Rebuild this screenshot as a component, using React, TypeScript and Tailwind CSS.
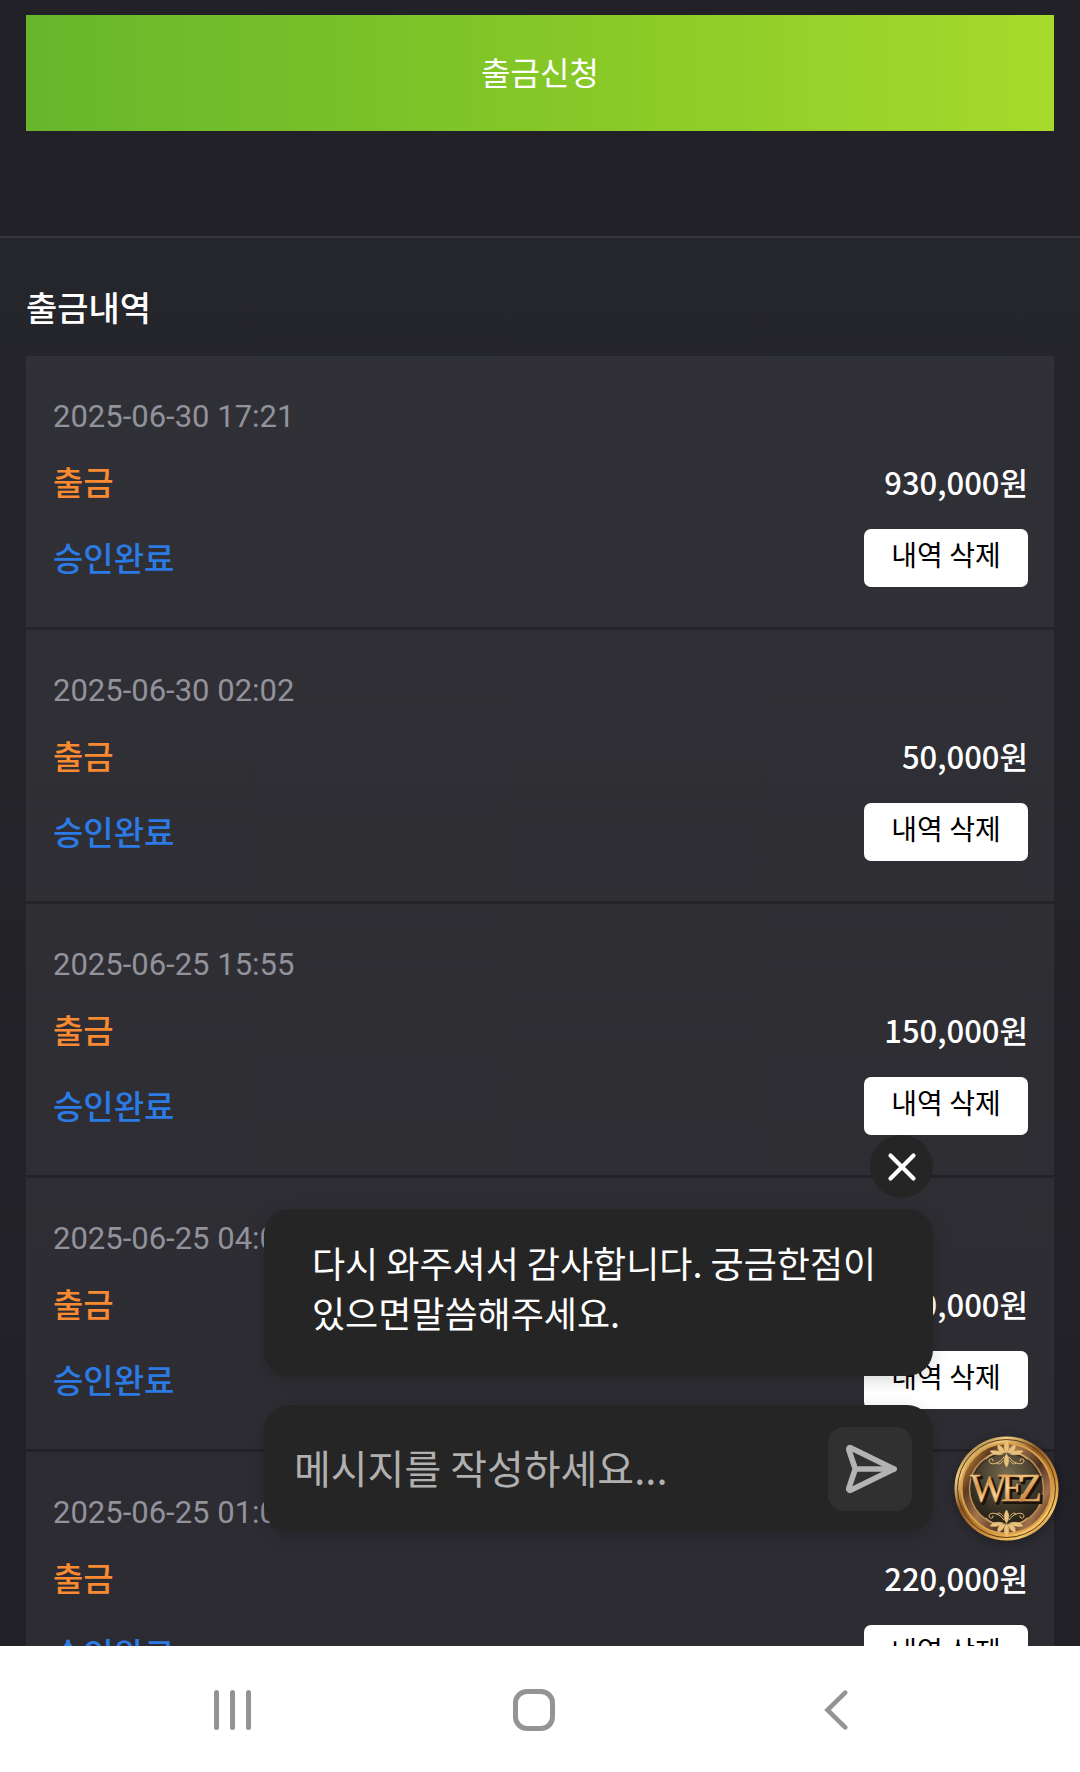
import { X } from "lucide-react";

const KR = "font-['Noto_Sans_CJK_KR',sans-serif]";

type Entry = { id: number; date: string; amount: string };

const entries: Entry[] = [
  { id: 1, date: "2025-06-30 17:21", amount: "930,000원" },
  { id: 2, date: "2025-06-30 02:02", amount: "50,000원" },
  { id: 3, date: "2025-06-25 15:55", amount: "150,000원" },
  { id: 4, date: "2025-06-25 04:02", amount: "100,000원" },
  { id: 5, date: "2025-06-25 01:03", amount: "220,000원" },
];

function HistoryRow({ entry }: { entry: Entry }) {
  return (
    <li className="mb-[3px] bg-white/5 pt-[35px] pr-[26px] pb-10 pl-[27px]">
      <time className="block font-[Roboto,sans-serif] text-[31px] leading-[52px] text-[#92929b]">
        {entry.date}
      </time>
      <div className="mt-[10px] flex h-[58px] items-center justify-between">
        <span className="text-[33px] font-medium text-[#f98a32]">출금</span>
        <span className="text-[31px] font-medium text-white">{entry.amount}</span>
      </div>
      <div className="mt-[18px] flex h-[58px] items-center justify-between">
        <span className="text-[33px] font-medium text-[#2c7be5]">승인완료</span>
        <button
          type="button"
          className="h-[58px] w-[164px] rounded-[7px] bg-white pb-2 text-[28px] leading-[50px] text-black"
        >
          내역 삭제
        </button>
      </div>
    </li>
  );
}

function Flourish() {
  return (
    <g fill="#e9c27d" stroke="#e9c27d" strokeWidth="0.600" strokeLinecap="round">
      <path d="M52.500 5c3 4 3 8 0 12c-3-4-3-8 0-12Z" />
      <path d="M51 17c-6 0-8-4-7-8c4 1 6 4 7 8ZM54 17c6 0 8-4 7-8c-4 1-6 4-7 8Z" />
      <path d="M49 18c-6 2-11 0-13-3c6-1 10 0 13 3ZM56 18c6 2 11 0 13-3c-6-1-10 0-13 3Z" />
      <path d="M52.500 18c3 4 3 9 0 13c-3-4-3-9 0-13Z" />
      <path
        d="M50 21c-4 7-14 9-15 4c0-3 5-3 4 0M55 21c4 7 14 9 15 4c0-3-5-3-4 0M46 18c-8-2-11 3-14 5M59 18c8-2 11 3 14 5M49 25c-2 3-5 4-6 2M56 25c2 3 5 4 6 2"
        fill="none"
        strokeWidth="1"
      />
    </g>
  );
}

function WezLogo() {
  return (
    <svg viewBox="0 0 105 105" className="size-full" aria-hidden="true">
      <defs>
        <linearGradient id="rim" x1="0.1" y1="0" x2="0.9" y2="1">
          <stop offset="0" stopColor="#7b4d18" />
          <stop offset="0.2" stopColor="#f0ce85" />
          <stop offset="0.4" stopColor="#8c5822" />
          <stop offset="0.65" stopColor="#c98a38" />
          <stop offset="0.85" stopColor="#f7c768" />
          <stop offset="1" stopColor="#7a4512" />
        </linearGradient>
        <linearGradient id="ring" x1="0" y1="0.2" x2="1" y2="0.8">
          <stop offset="0" stopColor="#c98b3c" />
          <stop offset="0.18" stopColor="#5c3a22" />
          <stop offset="0.4" stopColor="#a5764a" />
          <stop offset="0.65" stopColor="#4d2f22" />
          <stop offset="0.85" stopColor="#a1714c" />
          <stop offset="1" stopColor="#553216" />
        </linearGradient>
        <radialGradient id="disc" cx="0.5" cy="0.3" r="0.75">
          <stop offset="0" stopColor="#786b50" />
          <stop offset="0.5" stopColor="#463d2c" />
          <stop offset="1" stopColor="#1d1812" />
        </radialGradient>
        <linearGradient id="letters" x1="0" y1="0" x2="1" y2="1">
          <stop offset="0" stopColor="#fff0cd" />
          <stop offset="0.3" stopColor="#d99a50" />
          <stop offset="0.5" stopColor="#f6d497" />
          <stop offset="0.75" stopColor="#c98442" />
          <stop offset="1" stopColor="#fbe0ac" />
        </linearGradient>
      </defs>
      <circle cx="52.500" cy="52.500" r="52" fill="url(#rim)" />
      <circle cx="52.500" cy="52.500" r="49" fill="none" stroke="#5d3912" strokeWidth="1" />
      <circle cx="52.500" cy="52.500" r="45" fill="url(#ring)" stroke="#d9a04a" strokeWidth="2" />
      <circle cx="52.500" cy="52.500" r="37" fill="url(#disc)" stroke="#b88f58" strokeWidth="1.500" />
      <circle cx="52.500" cy="52.500" r="35" fill="none" stroke="#3b2918" strokeWidth="1" />
      <Flourish />
      <g transform="rotate(180 52.500 52.500)">
        <Flourish />
      </g>
      <g fontFamily="Liberation Serif, serif" fontSize="39">
        <text x="18 49 66" y="67" fill="#1b120a" stroke="#1b120a" strokeWidth="2">WEZ</text>
        <text x="16 47 64" y="65" fill="url(#letters)" stroke="#e0a65c" strokeWidth="0.500">WEZ</text>
      </g>
    </svg>
  );
}

function ChatWidget() {
  return (
    <>
      <section
        aria-label="채팅"
        className="absolute right-[147px] bottom-[114px] flex w-[669px] flex-col items-end"
      >
        <button
          type="button"
          aria-label="닫기"
          className="flex size-[63px] items-center justify-center rounded-full bg-[#252525] text-white"
        >
          <X className="size-[46px]" strokeWidth={2.2} />
        </button>
        <p className="mt-[11px] w-full rounded-[26px] bg-[#252525] px-12 pt-7 pb-[39px] text-[36px] leading-[50px] text-white shadow-[0_4px_16px_rgba(0,0,0,0.16)]">
          다시 와주셔서 감사합니다. 궁금한점이
          <br />
          있으면말씀해주세요.
        </p>
        <form
          onSubmit={(e) => e.preventDefault()}
          className="mt-[29px] flex h-[127px] w-full items-center rounded-[26px] bg-[#252525] pr-[21px] pl-[30px] shadow-[0_4px_16px_rgba(0,0,0,0.16)]"
        >
          <input
            type="text"
            aria-label="메시지"
            placeholder="메시지를 작성하세요..."
            className="min-w-0 flex-1 bg-transparent pb-1 text-[40px] text-white outline-none placeholder:text-[#b0b0b0]"
          />
          <button
            type="submit"
            aria-label="보내기"
            className="flex size-[84px] items-center justify-center rounded-[16px] bg-[#303030] text-[#b3b3b3]"
          >
            <svg
              viewBox="0 0 24 24"
              className="size-16"
              fill="none"
              stroke="currentColor"
              strokeWidth="2.1"
              strokeLinecap="round"
              strokeLinejoin="round"
              aria-hidden="true"
            >
              <path d="M4.700 4.030L21 12L4.700 19.970a.5.5 0 0 1-.55-.12a.56.56 0 0 1-.12-.57L6.500 12L4.030 4.730a.56.56 0 0 1 .12-.57a.5.5 0 0 1 .55-.13Z" />
              <path d="M6.500 12H21" />
            </svg>
          </button>
        </form>
      </section>
      <button
        type="button"
        aria-label="WEZ 채팅"
        className="absolute right-[21px] bottom-[105px] size-[105px] rounded-full shadow-[0_2px_12px_rgba(0,0,0,0.3)]"
      >
        <WezLogo />
      </button>
    </>
  );
}

function NavigationBar() {
  return (
    <nav
      aria-label="시스템"
      className="grid h-[126px] shrink-0 grid-cols-3 items-center justify-items-center bg-white pt-px pr-[93px] pl-[81px] text-[#949494]"
    >
      <button type="button" aria-label="최근 앱" className="flex h-10 gap-[11px]">
        <span className="w-[5px] rounded-full bg-current" />
        <span className="w-[5px] rounded-full bg-current" />
        <span className="w-[5px] rounded-full bg-current" />
      </button>
      <button
        type="button"
        aria-label="홈"
        className="size-[42px] rounded-[14px] border-5 border-current"
      />
      <button type="button" aria-label="뒤로">
        <svg viewBox="0 0 24 40" className="h-10 w-6" fill="none" aria-hidden="true">
          <path
            d="M21.200 2.600L3.500 20L21.200 37.400"
            stroke="currentColor"
            strokeWidth="4.600"
            strokeLinecap="round"
          />
        </svg>
      </button>
    </nav>
  );
}

export default function App() {
  return (
    <div className={`flex h-screen flex-col bg-[#222127] ${KR}`}>
      <div className="relative min-h-0 flex-1">
        <main className="h-full overflow-y-auto [scrollbar-width:none]">
          <div className="px-[26px] pt-[15px] pb-[105px]">
            <button
              type="button"
              className="h-[116px] w-full bg-linear-to-r from-[#66b62c] via-[#84c727] to-[#a7da2c] pb-1 text-[32px] text-white"
            >
              출금신청
            </button>
          </div>
          <section className="border-t-2 border-[#34363b] bg-linear-to-b from-[#25262b] to-[#212026] px-[26px]">
            <h2 className="pt-11 pb-6 text-[34px] leading-[50px] font-medium text-white">
              출금내역
            </h2>
            <ul>
              {entries.map((entry) => (
                <HistoryRow key={entry.id} entry={entry} />
              ))}
            </ul>
          </section>
        </main>
        <ChatWidget />
      </div>
      <NavigationBar />
    </div>
  );
}
